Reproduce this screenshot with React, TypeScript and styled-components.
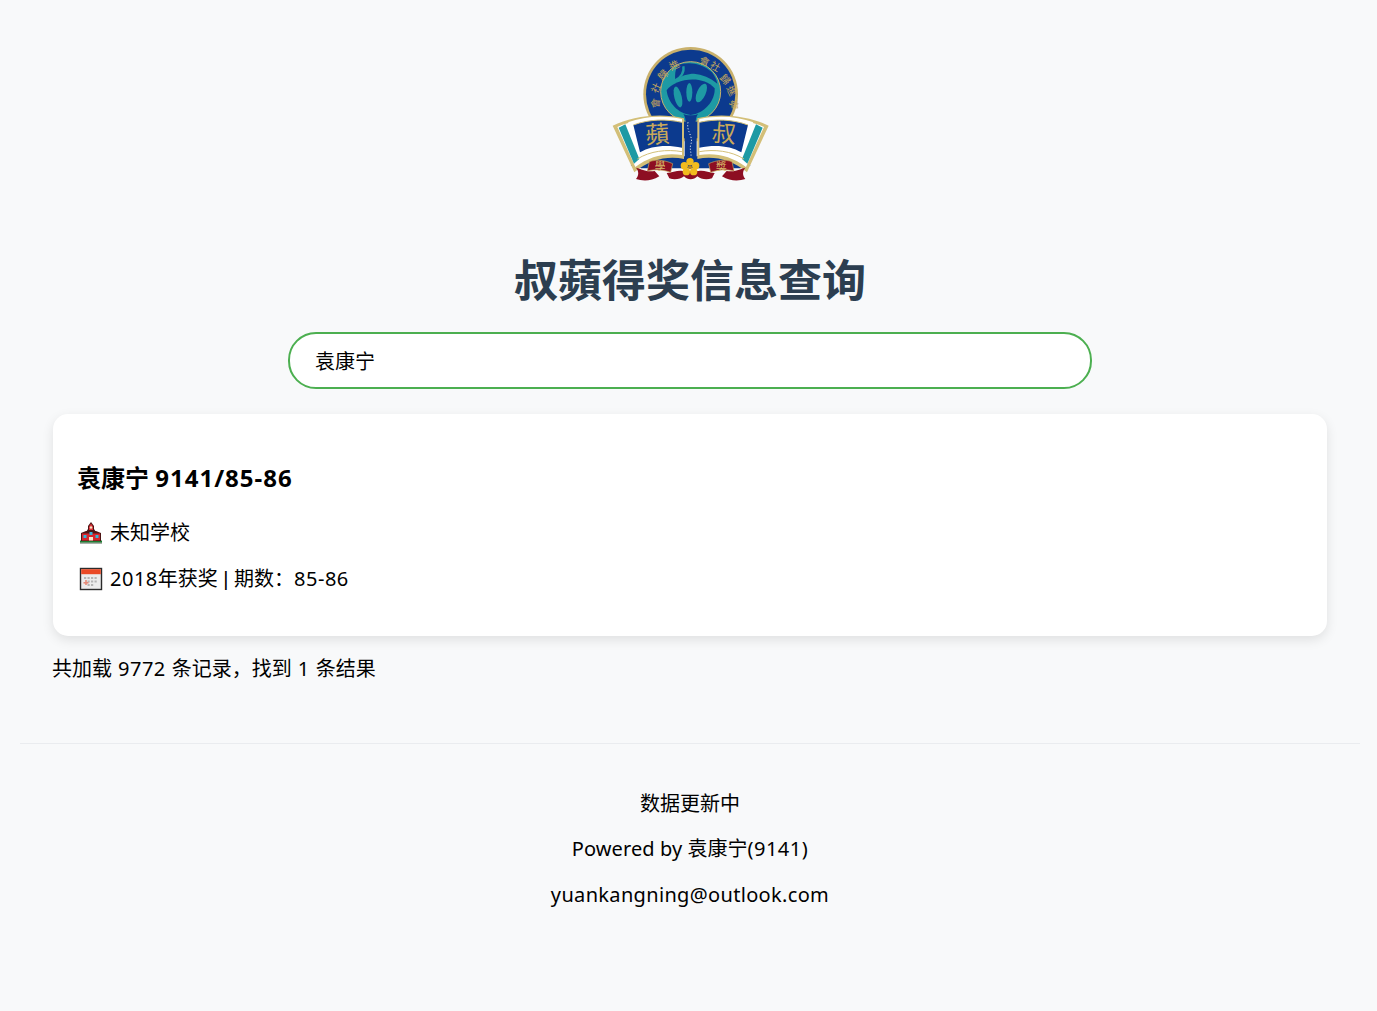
import React, { useState } from 'react';
import styled, { createGlobalStyle } from 'styled-components';

const GlobalStyle = createGlobalStyle`
  html, body {
    margin: 0;
    padding: 0;
    background: #f8f9fa;
    font-family: "Noto Sans", "Noto Sans CJK SC", sans-serif;
    color: #000;
  }
`;

const Page = styled.div`
  box-sizing: border-box;
  min-height: 1011px;
  padding: 0 17px 0 20px;
  display: flex;
  flex-direction: column;
`;

const Header = styled.header`
  display: flex;
  flex-direction: column;
  align-items: center;
  padding-top: 35px;
`;

const Title = styled.h1`
  margin: 58px 0 0;
  font-size: 44px;
  line-height: 64px;
  font-weight: 700;
  color: #2c3e50;
`;

const SearchWrap = styled.div`
  display: flex;
  justify-content: center;
  margin-top: 20px;
`;

const SearchInput = styled.input`
  box-sizing: border-box;
  width: 804px;
  height: 57px;
  padding: 0 25px;
  border: 2px solid #4caf50;
  border-radius: 28px;
  outline: none;
  background: #fff;
  font-family: inherit;
  font-size: 20px;
  color: #000;
`;

const Main = styled.main`
  margin: 25px 33px 0;
`;

const Card = styled.article`
  box-sizing: border-box;
  height: 222px;
  padding: 44px 25px 0;
  background: #fff;
  border-radius: 15px;
  box-shadow: 0 4px 12px rgba(0, 0, 0, 0.1);
`;

const CardTitle = styled.h3`
  margin: 0 0 0 -1px;
  font-size: 24px;
  line-height: 40px;
  font-weight: 700;
`;

const CardLine = styled.div`
  display: flex;
  align-items: center;
  height: 47px;
  font-size: 20px;
  line-height: 30px;
  &:first-of-type {
    margin-top: 12px;
    height: 45px;
  }
`;

const LineText = styled.span`
  margin-left: 7px;
`;

// 라틴 글자 폭 보정용
const Latin = styled.span<{ $spacing?: number }>`
  letter-spacing: ${({ $spacing }) => $spacing ?? 0.5}px;
`;

const Pipe = styled.span`
  font-family: "Liberation Sans", sans-serif;
`;

const Icon = styled.svg`
  width: 24px;
  height: 24px;
  flex: none;
  margin-left: 1px;
`;

const Summary = styled.p`
  margin: 18px 0 0 -1px;
  font-size: 20px;
  line-height: 30px;
  word-spacing: 0.8px;
`;

const Footer = styled.footer`
  margin-top: 59px;
  padding-top: 36.6px;
  border-top: 1px solid #eaecef;
  text-align: center;
`;

const FooterLine = styled.p`
  margin: 0;
  height: 46px;
  font-size: 20px;
  line-height: 46px;
  &:first-child {
    height: 45px;
  }
`;

const LogoText = styled.text`
  font-family: "Noto Sans CJK TC", "Noto Sans CJK SC", sans-serif;
  font-weight: 400;
`;

const ringChars: [string, number, number, number][] = [
  ['會', 164, 204, -85],
  ['社', 166, 158, -65],
  ['歸', 187, 118, -45],
  ['進', 222, 88, -25],
  ['會', 314, 76, 15],
  ['社', 347, 92, 30],
  ['歸', 378, 132, 50],
  ['進', 397, 166, 65],
  ['寧', 404, 208, 85],
];

const BookPage = () => (
  <g>
    <path d="M38 272C95 244 180 232 252 250L252 372C205 362 150 372 103 412Z" fill="#d3bf78" />
    <path d="M52 276C100 254 180 242 246 256L246 360C200 352 150 362 106 396Z" fill="#fff" />
    <path d="M56 278L76 268L118 372L102 386Z" fill="#1e9aa4" />
    <path d="M84 262C130 244 190 240 246 252L246 268C190 256 140 258 96 274Z" fill="#fff" />
    <path d="M100 270C148 252 200 252 246 262L246 338C200 328 152 332 120 352Z" fill="#0c3a8e" />
    <path d="M100 270C148 252 200 252 246 262" fill="none" stroke="#d3bf78" strokeWidth="3" />
    <path d="M112 372C150 348 200 342 246 350" fill="none" stroke="#d3bf78" strokeWidth="3" />
  </g>
);

const Tail = () => (
  <path d="M108 398C125 402 140 412 164 408L178 424C152 440 126 438 108 432C118 420 116 408 108 398Z" fill="#8d0e22" />
);

// 학교 로고: 줌 이미지 좌표계(540x465) 그대로 따라 그림
const Logo = () => (
  <svg width="180" height="155" viewBox="0 0 540 465" aria-label="logo">
    <circle cx="272" cy="178" r="142" fill="#c9b16c" />
    <circle cx="272" cy="178" r="134" fill="#0c3a8e" />
    <circle cx="272" cy="170" r="90" fill="#1e9aa4" stroke="#c9b16c" strokeWidth="3" />
    <path d="M232 92C262 78 306 84 336 112C345 124 350 134 352 146C332 128 306 118 282 116C262 116 244 122 226 136C224 120 226 104 232 92Z" fill="#0c3a8e" />
    <path d="M200 166C222 132 306 116 344 160C346 198 312 236 272 240C234 236 204 204 200 166Z" fill="#0c3a8e" />
    <ellipse cx="234" cy="186" rx="11" ry="32" transform="rotate(-14 234 186)" fill="#1e9aa4" />
    <ellipse cx="268" cy="172" rx="9" ry="28" fill="#1e9aa4" />
    <ellipse cx="304" cy="174" rx="13" ry="30" transform="rotate(24 304 174)" fill="#1e9aa4" />
    <path d="M250 94C254 112 242 128 226 136" fill="none" stroke="#1e9aa4" strokeWidth="7" />
    <g fill="#c9a95a" fontSize="30" textAnchor="middle" dominantBaseline="central">
      {ringChars.map(([ch, x, y, r], i) => (
        <LogoText key={i} x={x} y={y} transform={`rotate(${r} ${x} ${y})`}>
          {ch}
        </LogoText>
      ))}
    </g>
    <path d="M92 392C160 350 210 352 272 368C334 352 384 350 452 392L420 400L124 400Z" fill="#0c3a8e" />
    <BookPage />
    <g transform="translate(544 0) scale(-1 1)">
      <BookPage />
    </g>
    <path d="M250 236C258 242 286 242 294 236C286 250 286 262 290 274L290 372C300 382 310 388 316 396L228 396C234 388 246 382 254 372L254 274C258 262 258 250 250 236Z" fill="#0c3a8e" />
    <path d="M264 262C258 290 282 304 272 330C268 345 276 355 272 368" fill="none" stroke="#fff" strokeWidth="3" strokeDasharray="3 6" />
    <g fill="#c9a95a" textAnchor="middle" dominantBaseline="central">
      <LogoText x="172" y="292" fontSize="72" transform="rotate(-4 172 292)">蘋</LogoText>
      <LogoText x="372" y="290" fontSize="72" transform="rotate(5 372 290)">叔</LogoText>
    </g>
    <Tail />
    <g transform="translate(544 0) scale(-1 1)">
      <Tail />
    </g>
    <path d="M200 414C218 412 236 404 248 408L296 408C308 404 326 412 344 414L336 430C318 436 302 432 292 424C282 436 262 436 252 424C242 432 224 436 208 430Z" fill="#8d0e22" />
    <path d="M148 380C170 372 196 376 218 386L212 412C190 404 166 402 142 408Z" fill="#8d0e22" stroke="#c9a95a" strokeWidth="2" />
    <path d="M396 380C374 372 348 376 326 386L332 412C354 404 378 402 402 408Z" fill="#8d0e22" stroke="#c9a95a" strokeWidth="2" />
    <g fill="#d9bc6a" fontSize="32" textAnchor="middle" dominantBaseline="central">
      <LogoText x="180" y="392">學</LogoText>
      <LogoText x="364" y="392">獎</LogoText>
    </g>
    <g fill="#f2bc1e">
      <circle cx="270" cy="380" r="11" />
      <circle cx="287" cy="392" r="11" />
      <circle cx="281" cy="410" r="11" />
      <circle cx="259" cy="410" r="11" />
      <circle cx="253" cy="392" r="11" />
    </g>
    <circle cx="270" cy="397" r="6" fill="#c08a1a" />
  </svg>
);

const SchoolIcon = () => (
  <Icon viewBox="0 0 24 24">
    <rect x="1" y="21" width="22" height="2" fill="#a9b0a9" />
    <rect x="1" y="19.500" width="22" height="2" fill="#1f7a32" />
    <path d="M12 1l3 4v3l2 3H7l2-3V5z" fill="#4d1414" />
    <path d="M12 2.500l2 3V9h-4V5.500z" fill="#d9343a" />
    <circle cx="12" cy="6.500" r="1.200" fill="#f3e3c3" />
    <path d="M2 12l5-2h10l5 2v8H2z" fill="#4d1414" />
    <rect x="3" y="12.500" width="18" height="7" fill="#d8262d" />
    <rect x="4.500" y="14" width="3" height="3" fill="#35b5d9" />
    <rect x="16.500" y="14" width="3" height="3" fill="#35b5d9" />
    <rect x="10.500" y="11" width="3" height="3" fill="#35b5d9" />
    <rect x="10" y="16" width="4" height="3.500" fill="#f5e9d0" />
  </Icon>
);

const CalendarIcon = () => (
  <Icon viewBox="0 0 24 24">
    <rect x="1.500" y="1.500" width="21" height="21" fill="#ececec" stroke="#2b2b2b" strokeWidth="1.400" />
    <rect x="2.200" y="2.200" width="19.600" height="5" fill="#ea4a26" />
    <g fill="#b5b5b5">
      <rect x="5" y="10" width="2.200" height="2" />
      <rect x="8.500" y="10" width="2.200" height="2" />
      <rect x="12" y="10" width="2.200" height="2" />
      <rect x="15.500" y="10" width="2.200" height="2" />
      <rect x="8.500" y="13.500" width="2.200" height="2" />
      <rect x="12" y="13.500" width="2.200" height="2" />
      <rect x="15.500" y="13.500" width="2.200" height="2" />
      <rect x="8.500" y="17" width="2.200" height="2" />
      <rect x="12" y="17" width="2.200" height="2" />
    </g>
    <rect x="4.500" y="15" width="5" height="1.600" fill="#e58a78" />
    <rect x="6.200" y="13" width="1.600" height="5" fill="#e58a78" />
  </Icon>
);

const App: React.FC = () => {
  const [keyword, setKeyword] = useState('袁康宁');

  return (
    <Page>
      <GlobalStyle />
      <Header>
        <Logo />
        <Title>叔蘋得奖信息查询</Title>
      </Header>
      <SearchWrap>
        <SearchInput value={keyword} onChange={(e) => setKeyword(e.target.value)} />
      </SearchWrap>
      <Main>
        <Card>
          <CardTitle>
            袁康宁 <Latin $spacing={1}>9141/85-86</Latin>
          </CardTitle>
          <CardLine>
            <SchoolIcon />
            <LineText>未知学校</LineText>
          </CardLine>
          <CardLine>
            <CalendarIcon />
            <LineText>
              <Latin>2018</Latin>年获奖<Pipe> | </Pipe>期数：<Latin>85-86</Latin>
            </LineText>
          </CardLine>
        </Card>
        <Summary>
          共加载 <Latin>9772</Latin> 条记录，找到 <Latin>1</Latin> 条结果
        </Summary>
      </Main>
      <Footer>
        <FooterLine>数据更新中</FooterLine>
        <FooterLine>
          <Latin $spacing={0.1}>Powered by</Latin> 袁康宁<Latin>(9141)</Latin>
        </FooterLine>
        <FooterLine>
          <Latin $spacing={0.33}>yuankangning@outlook.com</Latin>
        </FooterLine>
      </Footer>
    </Page>
  );
};

export default App;
